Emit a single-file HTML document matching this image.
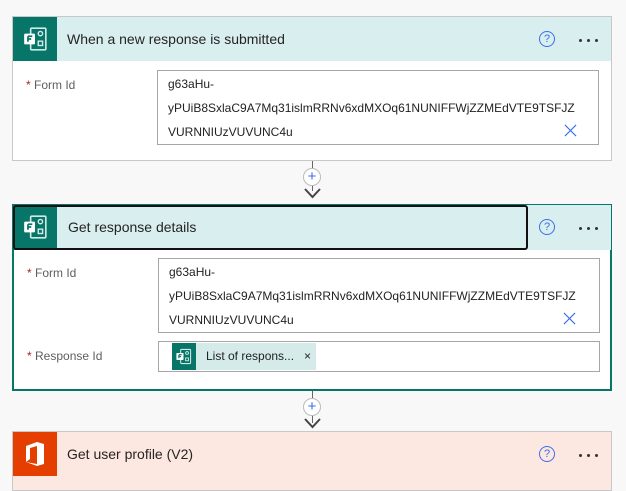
<!DOCTYPE html>
<html><head><style>
*{box-sizing:border-box;margin:0;padding:0}
html,body{width:626px;height:471px}
body{background:#f8f8f8;font-family:"Liberation Sans",sans-serif;position:relative;overflow:hidden;color:#323130}
.abs{position:absolute}
.card{position:absolute;left:12px;width:600px;background:#fff;border:1px solid #c8c8c8}
.hdr{position:absolute;left:0;top:0;right:0;height:44px;background:#d9eeee}
.ico{position:absolute;left:0;top:0;width:44px;height:44px;background:#077568}
.title{position:absolute;left:54px;top:14px;font-size:14px;color:#252423}
.help{position:absolute;width:16px;height:16px;border:1.3px solid #3a6ee8;border-radius:50%;color:#3a6ee8;font-size:11px;text-align:center;line-height:14px}
.dots{position:absolute;width:22px;height:4px}
.dots i{position:absolute;top:0;width:3px;height:3px;background:#333;border-radius:50%}
.lbl{position:absolute;font-size:12px;color:#605e5c}
.lbl b{color:#a4262c;font-weight:normal}
.box{position:absolute;border:1px solid #a6a6a6;background:#fff;font-size:12px;color:#222;padding:0 10px;line-height:24px}
.plus{position:absolute;width:18px;height:18px;border:1px solid #bbb;border-radius:50%;background:#fff;color:#3a6ee8;text-align:center;line-height:16px;font-size:15px}
</style></head><body>
<svg width="0" height="0" style="position:absolute"><defs><symbol id="f" viewBox="0 0 24 24"><rect x="8" y="2" width="14" height="20" rx="1" fill="none" stroke="#d0e8e6" stroke-width="1.5"/><circle cx="17" cy="7" r="2" fill="none" stroke="#d0e8e6" stroke-width="1.3"/><rect x="15" y="14" width="4" height="4" fill="none" stroke="#d0e8e6" stroke-width="1.3"/><rect x="2" y="7" width="10" height="10" rx="1" fill="#fff"/><path d="M5.5 9.5h4M5.5 9.5v5M5.5 12h3" stroke="#077568" stroke-width="1.6"/></symbol>
<symbol id="x" viewBox="0 0 14 14"><path d="M1 1l12 12M13 1L1 13" stroke="#3a6ee8" stroke-width="1.2" fill="none"/></symbol></defs></svg>

<div class="card" style="top:16px;height:145px">
 <div class="hdr"><div class="ico"><svg class="abs" style="left:9px;top:9px" width="26" height="26"><use href="#f"/></svg></div>
 <div class="title">When a new response is submitted</div>
 <div class="help" style="left:526px;top:14px">?</div><div class="dots" style="left:566px;top:22px"><i style="left:0"></i><i style="left:8px"></i><i style="left:16px"></i></div></div>
 <div class="lbl" style="left:13px;top:61px"><b>*</b> Form Id</div>
 <div class="box" style="left:144px;top:53px;width:442px;height:75px;padding-top:1px">g63aHu-<br>yPUiB8SxlaC9A7Mq31islmRRNv6xdMXOq61NUNIFFWjZZMEdVTE9TSFJZ<br>VURNNIUzVUVUNC4u</div>
 <svg class="abs" style="left:551px;top:107px" width="13" height="13"><use href="#x"/></svg>
</div>

<div class="abs" style="left:312px;top:161px;width:1px;height:30px;background:#666"></div>
<div class="plus" style="left:303px;top:168px">+</div>
<svg class="abs" style="left:304px;top:186px" width="17" height="14"><path d="M1 3l7.5 8 7.5-8" fill="none" stroke="#444" stroke-width="2"/></svg>

<div class="card" style="top:204px;height:187px;border:2px solid #077568">
 <div class="hdr" style="left:-1px;right:-1px;top:-1px;height:45px"><div class="ico" style="height:45px"><svg class="abs" style="left:9px;top:9px" width="26" height="26"><use href="#f"/></svg></div>
 <div class="abs" style="left:0;top:0;width:515px;height:45px;border:2px solid #111;border-radius:3px"></div>
 <div class="title" style="left:55px">Get response details</div>
 <div class="help" style="left:526px;top:14px">?</div><div class="dots" style="left:566px;top:22px"><i style="left:0"></i><i style="left:8px"></i><i style="left:16px"></i></div></div>
 <div class="lbl" style="left:13px;top:60px"><b>*</b> Form Id</div>
 <div class="box" style="left:144px;top:52px;width:442px;height:75px;padding-top:1px">g63aHu-<br>yPUiB8SxlaC9A7Mq31islmRRNv6xdMXOq61NUNIFFWjZZMEdVTE9TSFJZ<br>VURNNIUzVUVUNC4u</div>
 <svg class="abs" style="left:549px;top:106px" width="13" height="13"><use href="#x"/></svg>
 <div class="lbl" style="left:13px;top:143px"><b>*</b> Response Id</div>
 <div class="box" style="left:144px;top:135px;width:442px;height:31px;padding:0">
  <div class="abs" style="left:13px;top:1px;width:144px;height:27px;background:#d5ebea;font-size:12px;line-height:27px;padding-left:34px">List of respons... &nbsp;&nbsp;×
   <div class="abs" style="left:0;top:0;width:24px;height:27px;background:#077568"><svg class="abs" style="left:3px;top:5px" width="17" height="17"><use href="#f"/></svg></div></div>
 </div>
</div>

<div class="abs" style="left:312px;top:391px;width:1px;height:32px;background:#666"></div>
<div class="plus" style="left:303px;top:398px">+</div>
<svg class="abs" style="left:304px;top:416px" width="17" height="14"><path d="M1 3l7.5 8 7.5-8" fill="none" stroke="#444" stroke-width="2"/></svg>

<div class="card" style="top:431px;height:60px;background:#fde7e1">
 <div class="ico" style="background:#e43e00"><svg class="abs" style="left:12px;top:10px" width="20" height="24" viewBox="0 0 20 24"><path d="M1 4L12 0l7 2v20l-7 2L1 20l11 2V4L5 6v11l-4 3z" fill="#fff"/></svg></div>
 <div class="title">Get user profile (V2)</div>
 <div class="help" style="left:526px;top:14px">?</div><div class="dots" style="left:566px;top:22px"><i style="left:0"></i><i style="left:8px"></i><i style="left:16px"></i></div>
</div>
</body></html>
